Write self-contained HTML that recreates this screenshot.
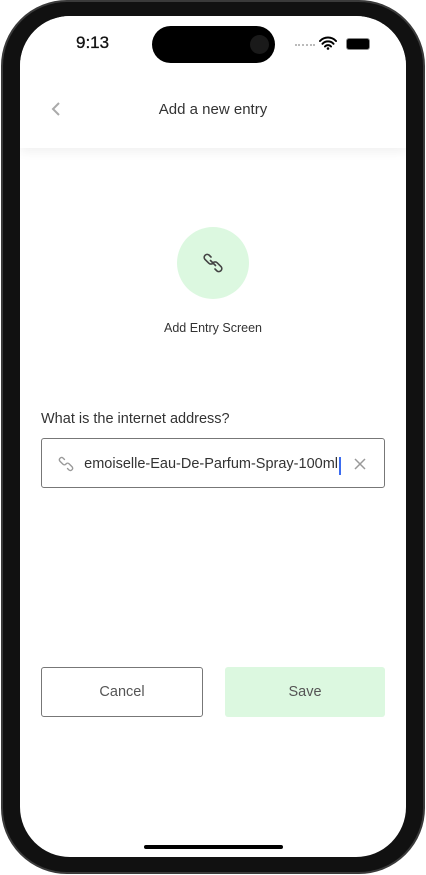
<!DOCTYPE html>
<html><head><style>
body{margin:0;width:426px;height:875px;background:#fff;position:relative;overflow:hidden;font-family:"Liberation Sans",sans-serif;}
.body{position:absolute;left:1px;top:0;width:424px;height:874px;background:#111;border-radius:66px;box-sizing:border-box;border:2px solid #3a3a3a;}
.screen{position:absolute;left:20px;top:16px;width:386px;height:841px;background:#fff;border-radius:50px;overflow:hidden;}
.island{position:absolute;left:132px;top:10px;width:123px;height:37px;background:#000;border-radius:19px;}
.cam{position:absolute;left:98px;top:9px;width:19px;height:19px;border-radius:50%;background:#1a1a1a;}
.abs{position:absolute;}
.hdr{position:absolute;left:0;top:0;width:386px;height:132px;background:#fff;box-shadow:0 4px 10px rgba(0,0,0,0.06);}
</style></head><body>
<div class="body"></div>
<div class="screen">
<div class="hdr"></div>
<div class="island"><div class="cam"></div></div>
<div class="abs" style="left:56px;top:17px;font-size:17px;color:#111;-webkit-text-stroke:0.3px #111">9:13</div>
<div class="abs" style="left:275px;top:28px;width:20px;height:2px;border-top:2px dotted #bbb"></div>
<svg class="abs" style="left:299px;top:20px" width="18" height="14" viewBox="0 0 18 14"><path d="M1 5a11 11 0 0 1 16 0M3.5 7.8a7.5 7.5 0 0 1 11 0M6 10.5a4 4 0 0 1 6 0" stroke="#000" stroke-width="2" fill="none" stroke-linecap="round"/><circle cx="9" cy="12.5" r="1.3"/></svg>
<div class="abs" style="left:326px;top:22px;width:22px;height:10px;background:#000;border-radius:3px;border:1px solid #888"></div>
<svg class="abs" style="left:30px;top:85px" width="12" height="16" viewBox="0 0 12 16"><path d="M9 2L3 8l6 6" stroke="#aaa" stroke-width="2" fill="none"/></svg>
<div class="abs" style="left:0;width:386px;top:85px;text-align:center;font-size:15px;color:#333">Add a new entry</div>
<div class="abs" style="left:157px;top:211px;width:72px;height:72px;border-radius:50%;background:#dcf8e0"></div>
<svg class="abs" style="left:181px;top:235px" width="24" height="24" viewBox="0 0 24 24" fill="none" stroke="#444" stroke-width="1.6" stroke-linecap="round"><path d="M10 6l-2-2a3 3 0 0 0-4.2 4.2l4 4a3 3 0 0 0 4.2 0M14 18l2 2a3 3 0 0 0 4.2-4.2l-4-4a3 3 0 0 0-4.2 0M9.5 9.5l5 5"/></svg>
<div class="abs" style="left:0;width:386px;top:305px;text-align:center;font-size:12.5px;color:#333">Add Entry Screen</div>
<div class="abs" style="left:21px;top:395px;font-size:14.5px;color:#333">What is the internet address?</div>
<div class="abs" style="left:21px;top:422px;width:342px;height:48px;border:1px solid #777;border-radius:3px"></div>
<svg class="abs" style="left:37px;top:439px" width="18" height="18" viewBox="0 0 24 24" fill="none" stroke="#999" stroke-width="1.8" stroke-linecap="round"><path d="M10 6l-2-2a3 3 0 0 0-4.2 4.2l4 4a3 3 0 0 0 4.2 0M14 18l2 2a3 3 0 0 0 4.2-4.2l-4-4a3 3 0 0 0-4.2 0"/></svg>
<div class="abs" style="left:64px;top:440px;width:254px;overflow:hidden;white-space:nowrap;direction:rtl;font-size:14.5px;color:#333"><span style="direction:ltr;unicode-bidi:bidi-override">Mademoiselle-Eau-De-Parfum-Spray-100ml</span></div>
<div class="abs" style="left:319px;top:441px;width:2px;height:18px;background:#3b6cf0"></div>
<svg class="abs" style="left:333px;top:441px" width="14" height="14" viewBox="0 0 14 14"><path d="M2 2l10 10M12 2L2 12" stroke="#999" stroke-width="1.5"/></svg>
<div class="abs" style="left:21px;top:651px;width:160px;height:48px;border:1px solid #777;border-radius:3px;text-align:center;line-height:48px;font-size:14.5px;color:#555">Cancel</div>
<div class="abs" style="left:205px;top:651px;width:160px;height:50px;background:#dcf8e0;border-radius:3px;text-align:center;line-height:50px;font-size:14.5px;color:#555">Save</div>
<div class="abs" style="left:124px;top:829px;width:139px;height:4px;background:#000;border-radius:2px"></div>
</div>
</body></html>
